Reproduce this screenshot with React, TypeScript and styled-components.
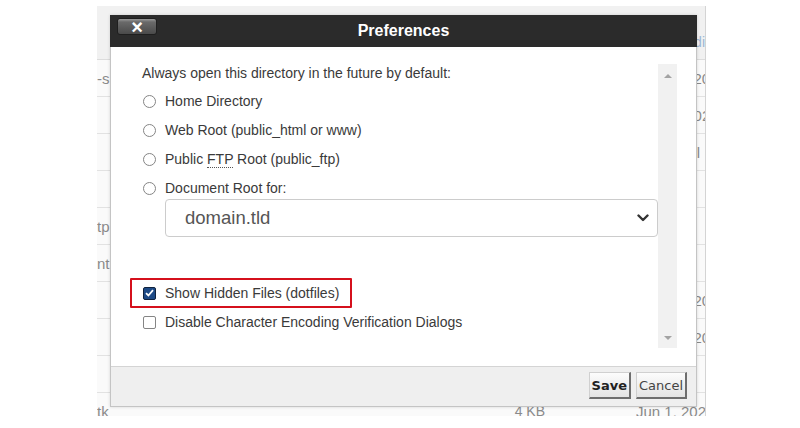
import React, { FC } from "react";
import styled, { createGlobalStyle } from "styled-components";

const GlobalStyle = createGlobalStyle`
  html, body {
    margin: 0;
    padding: 0;
    background: #ffffff;
  }
  body {
    font-family: "Liberation Sans", Arial, sans-serif;
  }
`;

interface IRow {
  name: string;
  size: string;
  date: string;
}

const rows: IRow[] = [
  { name: "-s", size: "", date: "May 31, 2022" },
  { name: "", size: "", date: "Jun 1, 2 02" },
  { name: "", size: "", date: "Jun 1, Jul" },
  { name: "", size: "", date: "Jun 1, 2:" },
  { name: "tp", size: "", date: "Jun 1, 2(" },
  { name: "nt", size: "", date: "Jun 1, 2" },
  { name: "", size: "", date: "May 31, 20" },
  { name: "", size: "", date: "May 31, 20" },
  { name: "", size: "", date: "Jun 1, 2" },
  { name: "tk", size: "4 KB", date: "Jun 1, 202" },
];

const App: FC = () => {
  return (
    <>
      <GlobalStyle />
      <Stage>
        <FileTable>
          <TableHeader>
            <HeaderLink>Last Modi</HeaderLink>
          </TableHeader>
          {rows.map((row, i) => (
            <TableRow key={i}>
              <NameCell>{row.name}</NameCell>
              <SizeCell>{row.size}</SizeCell>
              <DateCell>{row.date}</DateCell>
            </TableRow>
          ))}
        </FileTable>

        <Dialog>
          <DialogHeader>
            <CloseButton aria-label="Close">×</CloseButton>
            <DialogTitle>Preferences</DialogTitle>
            <span />
          </DialogHeader>

          <DialogBody>
            <ScrollContent>
              <Intro>Always open this directory in the future by default:</Intro>
              <OptionList>
                <OptionRow>
                  <Radio />
                  <OptionLabel>Home Directory</OptionLabel>
                </OptionRow>
                <OptionRow>
                  <Radio />
                  <OptionLabel>Web Root (public_html or www)</OptionLabel>
                </OptionRow>
                <OptionRow>
                  <Radio />
                  <OptionLabel>
                    Public <Abbr>FTP</Abbr> Root (public_ftp)
                  </OptionLabel>
                </OptionRow>
                <OptionRow>
                  <Radio />
                  <OptionLabel>Document Root for:</OptionLabel>
                </OptionRow>
              </OptionList>
              <SelectBox>
                <span>domain.tld</span>
                <svg width="12" height="8" viewBox="0 0 12 8">
                  <path
                    d="M1.5 1.5 L6 6 L10.5 1.5"
                    fill="none"
                    stroke="#333"
                    strokeWidth="2.4"
                    strokeLinecap="round"
                    strokeLinejoin="round"
                  />
                </svg>
              </SelectBox>

              <Highlight>
                <CheckBox $checked>
                  <svg width="9" height="8" viewBox="0 0 9 8">
                    <path
                      d="M1 4.2 L3.4 6.5 L8 1.2"
                      fill="none"
                      stroke="#fff"
                      strokeWidth="1.8"
                    />
                  </svg>
                </CheckBox>
                <OptionLabel>Show Hidden Files (dotfiles)</OptionLabel>
              </Highlight>
              <CheckRow>
                <CheckBox />
                <OptionLabel>Disable Character Encoding Verification Dialogs</OptionLabel>
              </CheckRow>
            </ScrollContent>
            <ScrollTrack>
              <Arrow $dir="up" />
              <Arrow $dir="down" />
            </ScrollTrack>
          </DialogBody>

          <DialogFooter>
            <FooterButton $primary>Save</FooterButton>
            <FooterButton>Cancel</FooterButton>
          </DialogFooter>
        </Dialog>
      </Stage>
    </>
  );
};

const Stage = styled.div`
  position: relative;
  width: 800px;
  height: 428px;
  overflow: hidden;
`;

const FileTable = styled.div`
  margin: 6px 0 0 97px;
  width: 609px;
  height: 410px;
  overflow: hidden;
  background: #fafafa;
  border-right: 1px solid #d4d4d4;
  box-sizing: border-box;
  font-size: 15px;
  color: #8a8a8a;
`;

const TableHeader = styled.div`
  display: flex;
  justify-content: flex-end;
  height: 54px;
  background: #f1f1f1;
  border-bottom: 1px solid #dcdcdc;
  box-sizing: border-box;
`;

const HeaderLink = styled.div`
  width: 8px;
  padding-top: 28px;
  overflow: hidden;
  direction: rtl;
  color: #9bb6d4;
  white-space: nowrap;
  font-size: 14px;
`;

const TableRow = styled.div`
  display: grid;
  grid-template-columns: 383px 68px 88px 1fr;
  height: 37px;
  align-items: center;
  border-bottom: 1px solid #e2e2e2;
  box-sizing: border-box;
  white-space: nowrap;
`;

const NameCell = styled.div`
  overflow: hidden;
`;

const SizeCell = styled.div`
  text-align: right;
  margin-right: 3px;
  font-size: 14px;
`;

const DateCell = styled.div`
  grid-column: 4 / 5;
  overflow: hidden;
`;

const Dialog = styled.div`
  position: absolute;
  left: 110px;
  top: 15px;
  width: 587px;
  height: 392px;
  display: flex;
  flex-direction: column;
  background: #ffffff;
  border: 1px solid #c4c4c4;
  box-sizing: border-box;
  box-shadow: 0 0 3px rgba(0, 0, 0, 0.15);
`;

const DialogHeader = styled.div`
  display: grid;
  grid-template-columns: 1fr auto 1fr;
  align-items: center;
  height: 32px;
  margin: -1px -1px 0;
  padding: 0 7px;
  background: #2b2b2b;
`;

const CloseButton = styled.button`
  justify-self: start;
  align-self: start;
  margin-top: 3px;
  width: 40px;
  height: 17px;
  padding: 0;
  border: 1px solid #1f1f1f;
  border-radius: 3px;
  background: linear-gradient(#9a9a9a 0%, #6a6a6a 20%, #4a4a4a 100%);
  color: #ffffff;
  font-family: "Liberation Sans", Arial, sans-serif;
  font-weight: 700;
  font-size: 20px;
  line-height: 14px;
  cursor: pointer;
`;

const DialogTitle = styled.h1`
  margin: 0;
  color: #ffffff;
  font-size: 16px;
  font-weight: 700;
`;

const DialogBody = styled.div`
  flex: 1;
  display: flex;
  padding: 17px 19px 18px 19px;
  min-height: 0;
`;

const ScrollContent = styled.div`
  flex: 1;
  font-size: 14px;
  color: #3a3a3a;
`;

const Intro = styled.div`
  margin-left: 12px;
  line-height: 18px;
`;

const OptionList = styled.div`
  display: flex;
  flex-direction: column;
  gap: 7px;
  margin-top: 8px;
`;

const OptionRow = styled.div`
  display: flex;
  align-items: center;
  height: 22px;
  margin-left: 12px;
`;

const CheckRow = styled(OptionRow)`
  margin-top: 3px;
`;

const Radio = styled.span`
  width: 13px;
  height: 13px;
  border: 1px solid #858585;
  border-radius: 50%;
  box-sizing: border-box;
  margin: 0 9px 0 1px;
  background: #ffffff;
`;

const CheckBox = styled.span<{ $checked?: boolean }>`
  display: flex;
  align-items: center;
  justify-content: center;
  width: 13px;
  height: 13px;
  margin: 0 9px 0 1px;
  box-sizing: border-box;
  border-radius: 2px;
  border: 1px solid ${(p) => (p.$checked ? "#10223d" : "#858585")};
  background: ${(p) => (p.$checked ? "#1d4a86" : "#ffffff")};
`;

const OptionLabel = styled.span`
  color: #3a3a3a;
  white-space: nowrap;
`;

const Abbr = styled.span`
  border-bottom: 1px dotted #555;
  line-height: 14px;
`;

const SelectBox = styled.div`
  display: flex;
  align-items: center;
  justify-content: space-between;
  margin-left: 35px;
  height: 38px;
  padding: 0 8px 0 19px;
  border: 1px solid #cccccc;
  border-radius: 4px;
  box-sizing: border-box;
  font-size: 18.5px;
  color: #555555;
`;

const Highlight = styled.div`
  display: flex;
  align-items: center;
  width: fit-content;
  height: 30px;
  margin-top: 41px;
  padding: 0 11px 0 10px;
  border: 2px solid #d5101c;
  border-radius: 1px;
  box-sizing: border-box;
`;

const ScrollTrack = styled.div`
  display: flex;
  flex-direction: column;
  justify-content: space-between;
  align-items: center;
  width: 19px;
  padding: 10px 0 8px;
  background: #f1f1f1;
  box-sizing: border-box;
`;

const Arrow = styled.span<{ $dir: "up" | "down" }>`
  width: 0;
  height: 0;
  border-left: 4px solid transparent;
  border-right: 4px solid transparent;
  ${(p) =>
    p.$dir === "up"
      ? "border-bottom: 4px solid #a3a3a3;"
      : "border-top: 4px solid #a3a3a3;"}
`;

const DialogFooter = styled.div`
  display: flex;
  justify-content: flex-end;
  align-items: center;
  gap: 5px;
  height: 40px;
  padding: 0 9px 2px 0;
  background: #efefef;
  border-top: 1px solid #d4d4d4;
  box-sizing: border-box;
`;

const FooterButton = styled.button<{ $primary?: boolean }>`
  height: 27px;
  padding: 0 2px;
  font-family: "DejaVu Sans", Verdana, sans-serif;
  font-size: 13px;
  font-weight: ${(p) => (p.$primary ? 700 : 400)};
  color: ${(p) => (p.$primary ? "#222222" : "#444444")};
  background: linear-gradient(#fcfcfc, #e4e4e4);
  border-style: solid;
  border-width: 1px 2px 2px 1px;
  border-color: #d0d0d0 #6e6e6e #6e6e6e #d0d0d0;
  border-radius: 0;
  cursor: pointer;
`;

export default App;
